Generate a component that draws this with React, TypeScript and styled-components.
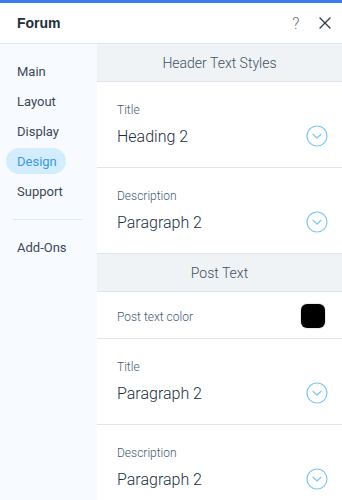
import React from "react";
import styled, { createGlobalStyle } from "styled-components";

const Global = createGlobalStyle`
  html, body { margin: 0; padding: 0; background: #ffffff; }
  body { font-family: Roboto, "Liberation Sans", sans-serif; -webkit-font-smoothing: antialiased; }
  * { box-sizing: border-box; }
`;

const Panel = styled.div`
  width: 342px;
  height: 500px;
  display: flex;
  flex-direction: column;
  overflow: hidden;
  border-top: 3px solid #3b7df0;
  background: #fff;
`;

const TopBar = styled.header`
  height: 41px;
  flex: none;
  display: flex;
  align-items: center;
  padding: 0 5px 0 17px;
  border-bottom: 1px solid #e3e7ea;
`;

const Title = styled.h1`
  margin: 0;
  flex: 1;
  font-family: "Liberation Sans", Arial, sans-serif;
  font-weight: 700;
  font-size: 14px;
  color: #20303c;
`;

const HeaderBtn = styled.button`
  border: none;
  background: none;
  padding: 0;
  width: 24px;
  height: 24px;
  margin-left: 5px;
  display: flex;
  align-items: center;
  justify-content: center;
  color: #6b747c;
  font-family: Roboto, "Liberation Sans", sans-serif;
  font-size: 16px;
  font-weight: 300;
  cursor: pointer;
`;

const Body = styled.div`
  flex: 1;
  display: flex;
  min-height: 0;
`;

const Sidebar = styled.nav`
  width: 97px;
  flex: none;
  background: #f7fbff;
  padding: 14px 6px 0 6px;
  display: flex;
  flex-direction: column;
`;

const NavItem = styled.div<{ $active?: boolean }>`
  height: 26px;
  margin-bottom: 4px;
  display: flex;
  align-items: center;
  padding-left: 11px;
  width: ${(p) => (p.$active ? "60px" : "auto")};
  border-radius: 13px;
  background: ${(p) => (p.$active ? "#d3edff" : "transparent")};
  color: ${(p) => (p.$active ? "#3899ec" : "#3b4857")};
  font-size: 13px;
  font-weight: 400;
`;

const NavDivider = styled.div`
  height: 1px;
  background: #d3edff;
  margin: 11px 9px 14px 7px;
`;

const Content = styled.main`
  flex: 1;
  display: flex;
  flex-direction: column;
  min-width: 0;
`;

const SectionHead = styled.div`
  height: 38px;
  flex: none;
  background: #f0f3f5;
  border-bottom: 1px solid #dfe5ea;
  display: flex;
  align-items: center;
  justify-content: center;
  padding-top: 1px;
  color: #3b5266;
  font-size: 14px;
  font-weight: 300;
`;

const SelectRow = styled.div`
  height: 86px;
  flex: none;
  border-bottom: 1px solid #dfe5ea;
  padding: 19px 14px 0 20px;
  display: flex;
  flex-direction: column;
`;

const Label = styled.div`
  font-size: 12px;
  font-weight: 300;
  color: #3f5a71;
  height: 16px;
  line-height: 16px;
  margin-top: 1px;
`;

const ValueLine = styled.div`
  margin-top: 7px;
  display: flex;
  align-items: center;
  justify-content: space-between;
`;

const Value = styled.div`
  font-size: 16px;
  font-weight: 300;
  color: #20303c;
`;

const ColorRow = styled.div`
  height: 47px;
  flex: none;
  border-bottom: 1px solid #dfe5ea;
  padding: 1px 17px 0 20px;
  display: flex;
  align-items: center;
  justify-content: space-between;
`;

const ColorLabel = styled.div`
  font-size: 12px;
  font-weight: 300;
  color: #3f5a71;
  padding-top: 2px;
`;

const Swatch = styled.div<{ $color: string }>`
  width: 24px;
  height: 24px;
  border-radius: 6px;
  background: ${(p) => p.$color};
  box-shadow: 0 0 0 1px rgba(0,0,0,0.08);
`;

const Chevron = () => (
  <svg width="22" height="22" viewBox="0 0 22 22" fill="none">
    <circle cx="11" cy="11" r="10" stroke="#7fc7f5" strokeWidth="1.2" />
    <path d="M7 9.2 L11 13 L15 9.2" stroke="#7fc7f5" strokeWidth="1.2" strokeLinecap="round" strokeLinejoin="round" />
  </svg>
);

const CloseIcon = () => (
  <svg width="14" height="14" viewBox="0 0 14 14">
    <path d="M2 2 L12 12 M12 2 L2 12" stroke="#2f3a44" strokeWidth="1.3" strokeLinecap="round" />
  </svg>
);

const Select = ({ label, value }: { label: string; value: string }) => (
  <SelectRow>
    <Label>{label}</Label>
    <ValueLine>
      <Value>{value}</Value>
      <Chevron />
    </ValueLine>
  </SelectRow>
);

const navItems = ["Main", "Layout", "Display", "Design", "Support"];

export default function App() {
  return (
    <>
      <Global />
      <Panel>
        <TopBar>
          <Title>Forum</Title>
          <HeaderBtn>?</HeaderBtn>
          <HeaderBtn>
            <CloseIcon />
          </HeaderBtn>
        </TopBar>
        <Body>
          <Sidebar>
            {navItems.map((n) => (
              <NavItem key={n} $active={n === "Design"}>
                {n}
              </NavItem>
            ))}
            <NavDivider />
            <NavItem>Add-Ons</NavItem>
          </Sidebar>
          <Content>
            <SectionHead>Header Text Styles</SectionHead>
            <Select label="Title" value="Heading 2" />
            <Select label="Description" value="Paragraph 2" />
            <SectionHead>Post Text</SectionHead>
            <ColorRow>
              <ColorLabel>Post text color</ColorLabel>
              <Swatch $color="#000000" />
            </ColorRow>
            <Select label="Title" value="Paragraph 2" />
            <Select label="Description" value="Paragraph 2" />
          </Content>
        </Body>
      </Panel>
    </>
  );
}
